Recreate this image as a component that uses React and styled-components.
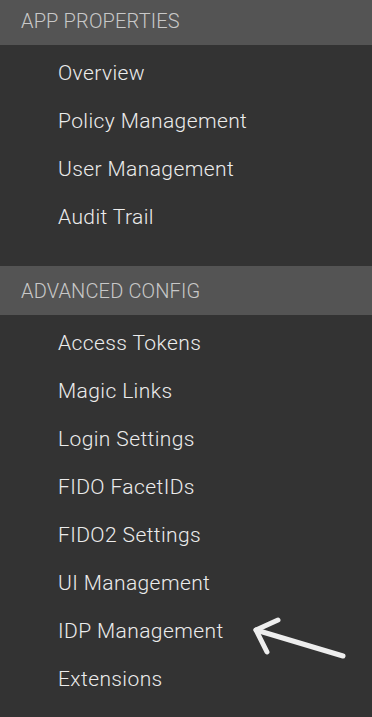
import React from 'react';
import styled, { createGlobalStyle } from 'styled-components';

const GlobalStyle = createGlobalStyle`
  html, body {
    margin: 0;
    padding: 0;
    background: #333333;
  }
  body {
    font-family: Roboto, "Liberation Sans", sans-serif;
  }
`;

const Sidebar = styled.nav`
  position: relative;
  width: 372px;
  height: 717px;
  overflow: hidden;
  background: #333333;
  display: flex;
  flex-direction: column;
`;

const Section = styled.div`
  display: flex;
  flex-direction: column;
  margin-top: ${({ $first }) => ($first ? '-4px' : '0')};
  padding-bottom: 25px;
`;

const Header = styled.div`
  height: 49px;
  display: flex;
  align-items: center;
  padding-left: 21px;
  background: #545454;
  color: #c8c8c8;
  font-size: 20px;
  font-weight: 300;
  letter-spacing: 0.15px;
  text-transform: uppercase;
`;

const List = styled.ul`
  list-style: none;
  margin: 0;
  padding: 4px 0 0;
`;

const Item = styled.li`
  height: 48px;
  display: flex;
  align-items: center;
  padding-left: 58px;
  color: #ececec;
  font-size: 21px;
  font-weight: 300;
  letter-spacing: 0.4px;
`;

const Arrow = styled.svg`
  position: absolute;
  left: 0;
  top: 0;
  pointer-events: none;
`;

const sections = [
  {
    title: 'App Properties',
    items: ['Overview', 'Policy Management', 'User Management', 'Audit Trail'],
  },
  {
    title: 'Advanced Config',
    items: [
      'Access Tokens',
      'Magic Links',
      'Login Settings',
      'FIDO FacetIDs',
      'FIDO2 Settings',
      'UI Management',
      'IDP Management',
      'Extensions',
    ],
  },
];

const App = () => {
  return (
    <>
      <GlobalStyle />
      <Sidebar>
        {sections.map((s, i) => (
          <Section key={s.title} $first={i === 0}>
            <Header>{s.title}</Header>
            <List>
              {s.items.map((it) => (
                <Item key={it}>{it}</Item>
              ))}
            </List>
          </Section>
        ))}
        <Arrow width="372" height="717" viewBox="0 0 372 717">
          <g stroke="#eeeeee" strokeWidth="5" strokeLinecap="round" strokeLinejoin="round" fill="none">
            <path d="M343 656 L256 630" />
            <path d="M278 620 L256 630 L267 652" />
          </g>
        </Arrow>
      </Sidebar>
    </>
  );
};

export default App;
